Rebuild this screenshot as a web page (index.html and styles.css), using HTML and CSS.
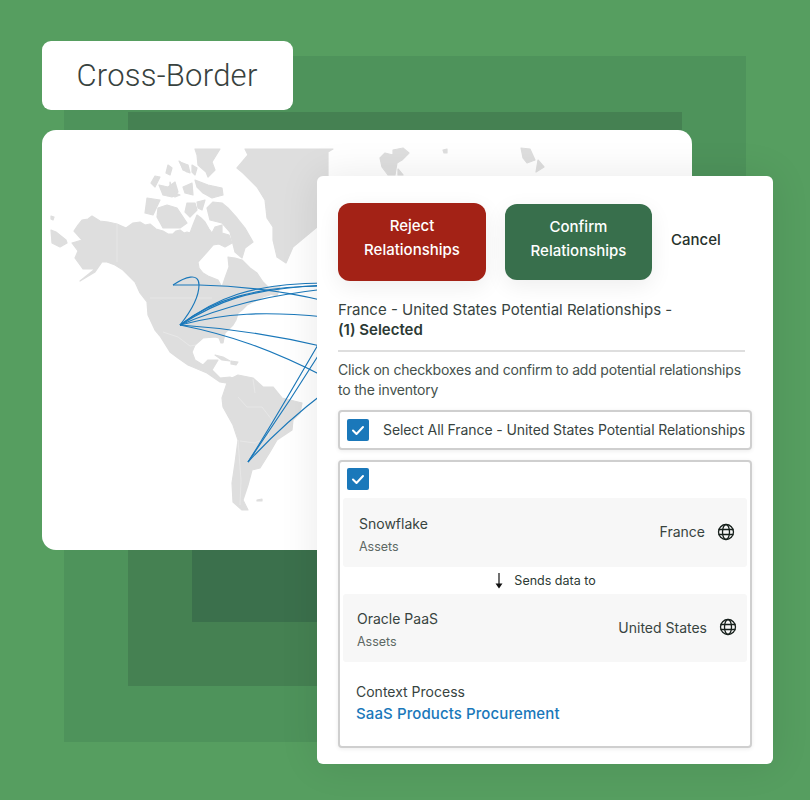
FILE: index.html
```html
<!DOCTYPE html>
<html lang="en">
<head>
<meta charset="utf-8">
<title>Cross-Border</title>
<link rel="stylesheet" href="styles.css">
</head>
<body>
<main class="stage">
  <div class="sq sq-1"><div class="sq sq-2"><div class="sq sq-3"></div></div></div>

  <div class="tag">Cross-Border</div>

  <section class="map-card">
    <svg class="map" viewBox="42 130 650 420" width="650" height="420" aria-hidden="true">
      <g class="land">
        <path d="M74 231 78 225 82 220 88 219 92 216 100 221 108 222 117 224 126 228 133 223 140 222 145 225 150 224 156 229 163 231 168 234 173 234 176 231 180 230 184 233 187 232 190 233 193 225 197 215 201 218 205 222 209 229 212 233 215 227 222 225 222 233 229 235 232 243 225 247 219 244 213 245 207 252 198 262 199 268 203 273 208 276 213 278 218 280 222 287 225 278 229 267 228 257 235 258 242 260 250 268 257 273 263 282 267 286 271 290 270 295 263 297 257 300 247 305 242 310 238 313 236 320 233 325 228 330 225 333 223 343 221 343 219 338 215 337 203 338 195 345 192 352 195 360 203 365 208 360 218 360 212 370 220 378 230 377 237 380 232 384 220 382 207 373 188 365 178 358 170 352 163 338 170 352 160 336 155 330 148 315 147 302 140 293 135 282 129 276 123 270 115 265 107 262 102 262 95 272 80 281 95 269 83 269 75 258 78 251 72 243 82 240Z"/>
        <path d="M51 230 56 232 66 240 67 243 60 247 52 243Z"/>
        <path d="M51 216 54 217 53 220 51 219Z"/>
        <path d="M155 176 160 177 155 187 151 183Z"/>
        <path d="M159 185 168 187 175 182 178 192 172 197 163 195Z"/>
        <path d="M147 198 160 200 153 215 145 213Z"/>
        <path d="M158 208 167 205 177 208 187 223 180 228 163 228 157 217Z"/>
        <path d="M168 165 172 168 170 175 166 173Z"/>
        <path d="M179 161 187 167 187 172 182 167Z"/>
        <path d="M195 149 220 149 212 162 215 170 208 177 206 172 198 165 197 155Z"/>
        <path d="M180 162 188 165 190 173 183 170Z"/>
        <path d="M192 165 197 168 195 175 192 172Z"/>
        <path d="M195 180 208 185 222 188 223 195 212 198 203 193 197 187Z"/>
        <path d="M183 187 192 183 193 195 185 193Z"/>
        <path d="M170 182 173 192 180 195 175 197 170 195Z"/>
        <path d="M187 203 195 203 197 210 190 217 185 212Z"/>
        <path d="M197 202 205 200 202 210 198 208Z"/>
        <path d="M207 208 213 202 222 203 228 208 237 218 245 228 253 242 245 248 242 258 235 252 230 232 222 223 210 220Z"/>
        <path d="M245 149 333 149 328 152 328 210 340 227 317 227 293 247 286 263 277 257 273 240 273 227 267 218 265 200 257 187 243 173 237 168 248 155Z"/>
        <path d="M380 158 385 153 393 155 393 150 403 148 409 153 402 160 397 163 395 175 388 175 382 167Z"/>
        <path d="M398 169 403 175 398 175Z"/>
        <path d="M443 150 447 149 447 153 444 153Z"/>
        <path d="M521 148 530 149 535 160 527 163 523 158Z"/>
        <path d="M538 160 544 167 536 172Z"/>
        <path d="M228 380 238 375 253 378 263 387 273 387 282 398 302 403 300 413 293 420 292 430 277 440 270 452 265 460 260 468 252 470 248 485 243 500 248 510 242 510 233 502 232 483 235 463 238 440 233 425 223 407 222 398Z"/>
        <path d="M215 355 223 357 230 361 222 360Z"/>
        <path d="M231 361 238 362 236 365 231 364Z"/>
        <path d="M257 500 262 499 262 501 257 501Z"/>
        <path d="M268 288 280 286 277 296 270 294Z"/>
      </g>
      <g class="borders">
        <path d="M117 224V262"/>
        <path d="M150 298H212"/>
        <path d="M163 332 178 337 190 346 196 345"/>
        <path d="M238 397 247 407 262 407 272 420 268 437 255 443 240 441"/>
        <path d="M238 440 241 480 240 505"/>
        <path d="M253 379 255 393"/>
      </g>
      <g class="arcs">
        <path d="M173 285C185 277 199 272 199 285 199 300 188 315 180 325"/>
        <path d="M173 285C185 285 195 285 199 285 240 286 280 290 325 301"/>
        <path d="M180 325C215 299 250 283 325 283"/>
        <path d="M180 325C213 300 255 286 325 286"/>
        <path d="M180 325C217 302 245 289 325 285"/>
        <path d="M180 325C225 306 265 296 325 289"/>
        <path d="M180 325C225 313 265 311 325 317"/>
        <path d="M180 325C225 328 270 334 325 347"/>
        <path d="M180 325C230 335 270 349 325 377"/>
        <path d="M248 462C275 420 300 375 325 333"/>
        <path d="M248 462C275 423 300 385 325 345"/>
        <path d="M248 462C272 436 296 414 325 392"/>
      </g>
    </svg>
  </section>

  <section class="panel">
    <div class="actions">
      <button class="btn btn-reject">Reject<br>Relationships</button>
      <button class="btn btn-confirm">Confirm<br>Relationships</button>
      <span class="cancel">Cancel</span>
    </div>

    <h2 class="title">France - United States Potential Relationships -<br><strong>(1) Selected</strong></h2>
    <hr class="rule">
    <p class="hint">Click on checkboxes and confirm to add potential relationships to the inventory</p>

    <div class="box select-all">
      <span class="check"><svg viewBox="0 0 22 22" width="22" height="22"><path d="M6 11.500 9.500 15 16 8"/></svg></span>
      <span class="select-label">Select All France - United States Potential Relationships</span>
    </div>

    <div class="box list">
      <span class="check"><svg viewBox="0 0 22 22" width="22" height="22"><path d="M6 11.500 9.500 15 16 8"/></svg></span>

      <div class="row row-a">
        <div class="row-text">
          <div class="name">Snowflake</div>
          <div class="sub">Assets</div>
        </div>
        <div class="place">
          <span>France</span>
          <svg class="globe" viewBox="0 0 18 18" width="18" height="18"><circle cx="9" cy="9" r="7.500"/><ellipse cx="9" cy="9" rx="3.500" ry="7.500"/><path d="M1.500 6.500H16.500M1.500 11.500H16.500"/></svg>
        </div>
      </div>

      <div class="sends">
        <svg class="arrow" viewBox="0 0 10 16" width="10" height="16"><path class="arrow-line" d="M5 0V12"/><path class="arrow-head" d="M1.500 10.500H8.500L5 15.500Z"/></svg>
        <span>Sends data to</span>
      </div>

      <div class="row row-b">
        <div class="row-text">
          <div class="name">Oracle PaaS</div>
          <div class="sub">Assets</div>
        </div>
        <div class="place">
          <span>United States</span>
          <svg class="globe" viewBox="0 0 18 18" width="18" height="18"><circle cx="9" cy="9" r="7.500"/><ellipse cx="9" cy="9" rx="3.500" ry="7.500"/><path d="M1.500 6.500H16.500M1.500 11.500H16.500"/></svg>
        </div>
      </div>

      <div class="context">
        <div class="context-label">Context Process</div>
        <a class="context-link">SaaS Products Procurement</a>
      </div>
    </div>
  </section>
</main>
</body>
</html>
```

FILE: styles.css
```css
* { box-sizing: border-box; }

html, body {
  margin: 0;
  padding: 0;
}

body {
  width: 810px;
  height: 800px;
  overflow: hidden;
  background: #569e60;
  font-family: Inter, "Noto Sans", sans-serif;
  color: #2c3a34;
}

.stage {
  position: relative;
  width: 810px;
  height: 800px;
  padding: 56px 64px 58px;
}

.sq {
  display: flex;
  width: 100%;
  height: 100%;
  padding: 56px 64px;
}
.sq-1 { background: #4e935b; }
.sq-2 { background: #458152; padding-bottom: 64px; }
.sq-3 { background: #3b704c; }

.tag {
  position: absolute;
  left: 42px;
  top: 41px;
  width: 251px;
  height: 69px;
  display: flex;
  align-items: center;
  justify-content: center;
  padding-right: 1px;
  background: #fff;
  border-radius: 9px;
  font-family: Roboto, sans-serif;
  font-weight: 300;
  font-size: 31px;
  letter-spacing: .25px;
  color: #38423e;
}

.map-card {
  position: absolute;
  left: 42px;
  top: 130px;
  width: 650px;
  height: 420px;
  background: #fff;
  border-radius: 14px;
  overflow: hidden;
}

.map { display: block; }

.land { filter: blur(.35px); }
.land path { fill: #dedede; stroke: #dedede; stroke-width: 1.200; stroke-linejoin: round; }
.borders path { fill: none; stroke: #ebebeb; stroke-width: .7; }
.arcs path { fill: none; stroke: #1a78ba; stroke-width: 1.150; }

.panel {
  position: absolute;
  left: 317px;
  top: 176px;
  width: 456px;
  height: 588px;
  padding: 27px 21px 0;
  background: #fff;
  border-radius: 6px;
  box-shadow: 0 0 40px rgba(0, 0, 0, .09);
}

.actions {
  display: flex;
  align-items: center;
  height: 78px;
}

.btn {
  display: block;
  border: 0;
  padding: 0 0 8px;
  font: 500 15px/24px Inter, sans-serif;
  color: #fff;
  text-align: center;
  border-radius: 12px;
  box-shadow: 0 6px 22px rgba(0, 0, 0, .07);
}
.btn-reject { width: 148px; height: 78px; background: #a32216; }
.btn-confirm { width: 147px; height: 76px; margin-left: 19px; background: #386f4c; padding-bottom: 7px; }

.cancel {
  margin-left: 19px;
  margin-bottom: 5px;
  font-weight: 500;
  font-size: 15px;
  color: #26312c;
}

.title {
  margin: 19px 0 0;
  font-size: 15px;
  line-height: 20px;
  font-weight: 400;
  color: #38443f;
}
.title strong { font-weight: 600; color: #2c3a34; }

.rule {
  width: 407px;
  height: 2px;
  margin: 10px 0 0;
  border: 0;
  background: #dedede;
}

.hint {
  width: 410px;
  margin: 8px 0 0;
  font-size: 14px;
  line-height: 20px;
  letter-spacing: -.2px;
  color: #45514c;
}

.box {
  width: 414px;
  background: #fff;
  border: 2px solid #cfcfcf;
  border-radius: 4px;
  box-shadow: 0 1px 4px rgba(0, 0, 0, .08);
}

.select-all {
  display: flex;
  align-items: center;
  height: 40px;
  margin-top: 10px;
  padding-left: 7px;
}

.select-label {
  margin: 0 0 2px 14px;
  font-size: 14px;
  white-space: nowrap;
  letter-spacing: -.09px;
  color: #38443f;
}

.check {
  flex: none;
  display: block;
  width: 22px;
  height: 22px;
  background: #1a78ba;
  border-radius: 2px;
}
.check svg { display: block; }
.check path { fill: none; stroke: #fff; stroke-width: 2; stroke-linecap: round; stroke-linejoin: round; }

.list {
  height: 288px;
  margin-top: 10px;
  padding: 6px 3px 0;
}
.list > .check { margin-left: 4px; }

.row {
  display: flex;
  justify-content: space-between;
  align-items: center;
  background: #f7f7f7;
  border-radius: 3px;
}
.row-a { height: 69px; margin-top: 8px; padding: 0 12px 0 16px; }
.row-b { height: 68px; padding: 0 10px 0 14px; }

.row-text { padding-top: 4px; }

.name { font-size: 14px; line-height: 20px; color: #38443f; }
.sub { margin-top: 4px; font-size: 12.500px; line-height: 18px; color: #5d6864; }

.place {
  display: flex;
  align-items: center;
  gap: 12px;
  margin-bottom: 2px;
  font-size: 14px;
  color: #38443f;
}

.globe { display: block; }
.globe circle, .globe ellipse, .globe path { fill: none; stroke: #17201c; stroke-width: 1.300; }

.sends {
  display: flex;
  align-items: center;
  justify-content: center;
  gap: 10px;
  height: 27px;
  font-size: 12.500px;
  color: #2c3a34;
}
.arrow { display: block; }
.arrow-line { stroke: #111; stroke-width: 1.200; fill: none; }
.arrow-head { fill: #111; }

.context { padding: 20px 0 0 13px; }
.context-label { font-size: 14px; line-height: 20px; color: #38443f; }
.context-link {
  display: block;
  margin-top: 2px;
  font-size: 15px;
  line-height: 20px;
  font-weight: 500;
  letter-spacing: .1px;
  color: #1a78ba;
}
```
